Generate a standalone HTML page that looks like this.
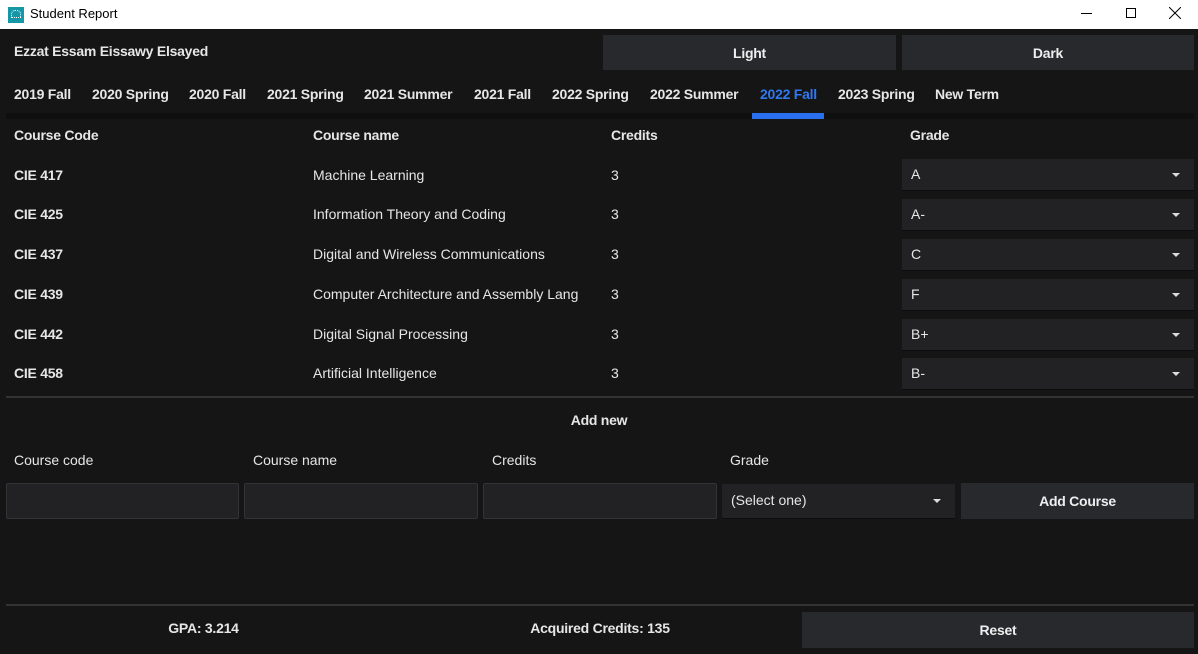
<!DOCTYPE html>
<html><head><meta charset="utf-8"><style>
*{margin:0;padding:0;box-sizing:border-box}
body{width:1198px;height:654px;background:#151516;font-family:"Liberation Sans",sans-serif;font-size:14px;color:#e6e6e6;position:relative;overflow:hidden}
.a{position:absolute;white-space:nowrap}
.b{font-weight:bold;letter-spacing:-0.25px}
.t{line-height:18px}
.btn{position:absolute;background:#28292d;color:#eee;font-weight:bold;letter-spacing:-0.25px;display:flex;align-items:center;justify-content:center}
.cb{position:absolute;background:#222225;border-bottom:1px solid #0c0c0c;left:902px;width:292px;height:32px;padding-left:9px;line-height:31px}
.arr{position:absolute;right:14px;top:14px;width:0;height:0;border-left:4px solid transparent;border-right:4px solid transparent;border-top:4px solid #ddd}
.in{position:absolute;top:483px;height:36px;background:#222225;border:1px solid #333336;border-radius:2px}
</style></head><body>
<div class="a" style="left:0;top:0;width:1198px;height:29px;background:#fff"></div>
<div class="a" style="left:8px;top:7px;width:16px;height:16px;background:#1597a8"></div>
<div class="a" style="left:11px;top:10px;width:10px;height:8px;border:1px dotted #fff;border-radius:4px 4px 0 0"></div>
<div class="a t" style="left:30px;top:5px;color:#000;font-size:13px">Student Report</div>
<div class="a" style="left:1081px;top:13px;width:11px;height:1px;background:#000"></div>
<div class="a" style="left:1126px;top:8px;width:10px;height:10px;border:1px solid #000"></div>
<svg class="a" style="left:1169px;top:7px" width="12" height="12"><path d="M0 0L12 12M12 0L0 12" stroke="#000" stroke-width="1"/></svg>

<div class="a b t" style="left:14px;top:42px">Ezzat Essam Eissawy Elsayed</div>
<div class="btn" style="left:603px;top:35px;width:293px;height:35px">Light</div>
<div class="btn" style="left:902px;top:35px;width:292px;height:35px">Dark</div>

<div class="a" style="left:6px;top:113px;width:1188px;height:6px;background:#0f0f10"></div>
<div class="a" style="left:752px;top:113px;width:72px;height:6px;background:#2a6ff0"></div>
<div class="a b t" style="left:14px;top:85px">2019 Fall</div>
<div class="a b t" style="left:92px;top:85px">2020 Spring</div>
<div class="a b t" style="left:189px;top:85px">2020 Fall</div>
<div class="a b t" style="left:267px;top:85px">2021 Spring</div>
<div class="a b t" style="left:364px;top:85px">2021 Summer</div>
<div class="a b t" style="left:474px;top:85px">2021 Fall</div>
<div class="a b t" style="left:552px;top:85px">2022 Spring</div>
<div class="a b t" style="left:650px;top:85px">2022 Summer</div>
<div class="a b t" style="left:760px;top:85px;color:#2f78f0">2022 Fall</div>
<div class="a b t" style="left:838px;top:85px">2023 Spring</div>
<div class="a b t" style="left:935px;top:85px">New Term</div>

<div class="a b t" style="left:14px;top:126px">Course Code</div>
<div class="a b t" style="left:313px;top:126px">Course name</div>
<div class="a b t" style="left:611px;top:126px">Credits</div>
<div class="a b t" style="left:910px;top:126px">Grade</div>

<div class="a b t" style="left:14px;top:166px">CIE 417</div><div class="a t" style="left:313px;top:166px">Machine Learning</div><div class="a t" style="left:611px;top:166px">3</div>
<div class="cb" style="top:159px">A<div class="arr"></div></div>
<div class="a b t" style="left:14px;top:205px">CIE 425</div><div class="a t" style="left:313px;top:205px">Information Theory and Coding</div><div class="a t" style="left:611px;top:205px">3</div>
<div class="cb" style="top:199px">A-<div class="arr"></div></div>
<div class="a b t" style="left:14px;top:245px">CIE 437</div><div class="a t" style="left:313px;top:245px">Digital and Wireless Communications</div><div class="a t" style="left:611px;top:245px">3</div>
<div class="cb" style="top:239px">C<div class="arr"></div></div>
<div class="a b t" style="left:14px;top:285px">CIE 439</div><div class="a t" style="left:313px;top:285px">Computer Architecture and Assembly Lang</div><div class="a t" style="left:611px;top:285px">3</div>
<div class="cb" style="top:279px">F<div class="arr"></div></div>
<div class="a b t" style="left:14px;top:325px">CIE 442</div><div class="a t" style="left:313px;top:325px">Digital Signal Processing</div><div class="a t" style="left:611px;top:325px">3</div>
<div class="cb" style="top:319px">B+<div class="arr"></div></div>
<div class="a b t" style="left:14px;top:364px">CIE 458</div><div class="a t" style="left:313px;top:364px">Artificial Intelligence</div><div class="a t" style="left:611px;top:364px">3</div>
<div class="cb" style="top:358px">B-<div class="arr"></div></div>

<div class="a" style="left:6px;top:396px;width:1188px;height:2px;background:#333335"></div>
<div class="a b t" style="left:0;width:1198px;text-align:center;top:411px">Add new</div>

<div class="a t" style="left:14px;top:451px">Course code</div>
<div class="a t" style="left:253px;top:451px">Course name</div>
<div class="a t" style="left:492px;top:451px">Credits</div>
<div class="a t" style="left:730px;top:451px">Grade</div>

<div class="in" style="left:6px;width:233px"></div>
<div class="in" style="left:244px;width:234px"></div>
<div class="in" style="left:483px;width:234px"></div>
<div class="cb" style="left:722px;width:233px;top:484px;height:35px;line-height:33px">(Select one)<div class="arr" style="top:15px"></div></div>
<div class="btn" style="left:961px;top:483px;width:233px;height:36px">Add Course</div>

<div class="a" style="left:6px;top:604px;width:1188px;height:2px;background:#333335"></div>
<div class="a b t" style="left:6px;width:395px;text-align:center;top:619px">GPA: 3.214</div>
<div class="a b t" style="left:401px;width:398px;text-align:center;top:619px">Acquired Credits: 135</div>
<div class="btn" style="left:802px;top:612px;width:392px;height:36px">Reset</div>
</body></html>
